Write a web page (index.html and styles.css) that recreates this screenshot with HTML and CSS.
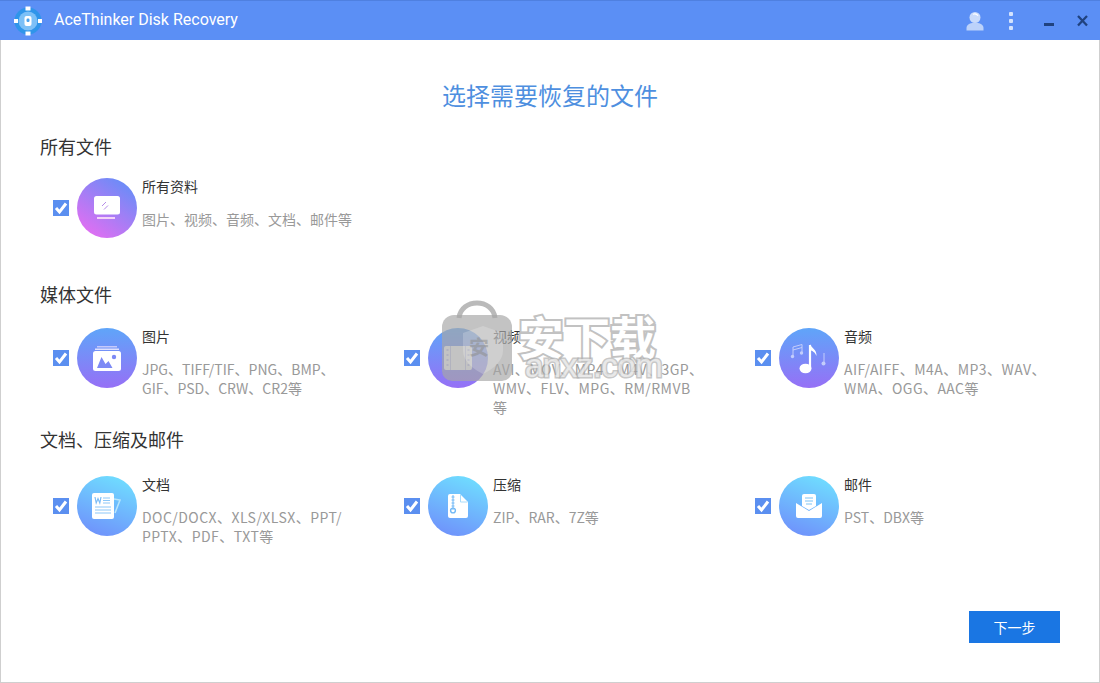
FILE: index.html
```html
<!DOCTYPE html>
<html lang="zh-CN">
<head>
<meta charset="utf-8">
<title>AceThinker Disk Recovery</title>
<link rel="stylesheet" href="styles.css">
</head>
<body>
<div class="window">
  <header class="topbar">
    <svg class="logo" width="30" height="30" viewBox="0 0 30 30">
      <circle cx="15" cy="15" r="13.500" fill="#2f95ea"/>
      <circle cx="15" cy="15" r="9.500" fill="#7cc0f7"/>
      <rect x="12.500" y="0.500" width="5" height="4" fill="#fff"/>
      <rect x="12.500" y="25.500" width="5" height="4" fill="#fff"/>
      <rect x="1" y="13" width="4" height="4" fill="#fff"/>
      <rect x="25" y="13" width="4" height="4" fill="#fff"/>
      <rect x="11.500" y="10" width="7" height="10" rx="2" fill="#fff"/>
      <rect x="13.500" y="12.500" width="3" height="3.500" rx="1.200" fill="#4aa3ef"/>
    </svg>
    <span class="app-name">AceThinker Disk Recovery</span>
    <div class="controls">
      <svg class="ctl-user" width="20" height="20" viewBox="0 0 20 20">
        <circle cx="10" cy="6.500" r="5.500" fill="#c9dbfb"/>
        <path d="M8 3.200a4 4 0 0 1 5 1.600" stroke="#fff" stroke-width="1.200" fill="none"/>
        <path d="M1.500 19.500v-2.500c0-3 3-4.500 5.500-5h6c2.500.5 5.500 2 5.500 5v2.500z" fill="#bcd2fa"/>
      </svg>
      <svg class="ctl-more" width="8" height="20" viewBox="0 0 8 20">
        <rect x="2" y="1" width="4" height="4" rx="1" fill="#d4e3fd"/>
        <rect x="2" y="8" width="4" height="4" rx="1" fill="#d4e3fd"/>
        <rect x="2" y="15" width="4" height="4" rx="1" fill="#d4e3fd"/>
      </svg>
      <svg class="ctl-min" width="10" height="20" viewBox="0 0 10 20">
        <rect x="0" y="12" width="10" height="3" fill="#20427f"/>
      </svg>
      <svg class="ctl-close" width="11" height="20" viewBox="0 0 11 20">
        <path d="M1 5l9 9.500M10 5l-9 9.500" stroke="#20427f" stroke-width="2.300" fill="none"/>
      </svg>
    </div>
  </header>

  <main class="content">
    <h1 class="page-title">选择需要恢复的文件</h1>

    <section class="section section-all">
      <h2 class="section-title">所有文件</h2>
      <div class="grid">
        <div class="item">
          <span class="check"><svg width="16" height="16" viewBox="0 0 16 16"><path d="M3 8l3.500 4L13 3.500" stroke="#fff" stroke-width="3" fill="none"/></svg></span>
          <span class="disc disc-pink">
            <svg width="28" height="24" viewBox="0 0 28 24">
              <rect x="1" y="0" width="26" height="18.500" rx="2.500" fill="#fff"/>
              <rect x="4" y="21" width="18" height="2" fill="#f3d3f8"/>
              <path d="M9 10l4-4M11 13.500l4-4" stroke="#b58be8" stroke-width="1"/>
            </svg>
          </span>
          <div class="info">
            <div class="name">所有资料</div>
            <p class="desc">图片、视频、音频、文档、邮件等</p>
          </div>
        </div>
      </div>
    </section>

    <section class="section section-media">
      <h2 class="section-title">媒体文件</h2>
      <div class="grid">
        <div class="item">
          <span class="check"><svg width="16" height="16" viewBox="0 0 16 16"><path d="M3 8l3.500 4L13 3.500" stroke="#fff" stroke-width="3" fill="none"/></svg></span>
          <span class="disc disc-violet">
            <svg width="28" height="25" viewBox="0 0 28 25">
              <rect x="4" y="0" width="20" height="1.500" fill="#c6c9fb"/>
              <rect x="2" y="2.500" width="24" height="1.500" fill="#dfe0fd"/>
              <rect x="0" y="5" width="28" height="20" rx="2.500" fill="#fff"/>
              <path d="M4 22l4.500-11 4 7 3-3 4 7z" fill="#7d8af5"/>
              <circle cx="21" cy="11" r="2.200" fill="#7d8af5"/>
            </svg>
          </span>
          <div class="info">
            <div class="name">图片</div>
            <p class="desc">JPG、TIFF/TIF、PNG、BMP、<br>GIF、PSD、CRW、CR2等</p>
          </div>
        </div>
        <div class="item">
          <span class="check"><svg width="16" height="16" viewBox="0 0 16 16"><path d="M3 8l3.500 4L13 3.500" stroke="#fff" stroke-width="3" fill="none"/></svg></span>
          <span class="disc disc-violet">
            <svg width="28" height="24" viewBox="0 0 28 24">
              <rect x="0" y="0" width="28" height="24" rx="2" fill="#fff"/>
              <rect x="6" y="0" width="1" height="24" fill="#c6c9f0"/>
              <rect x="21" y="0" width="1" height="24" fill="#c6c9f0"/>
              <path d="M2.500 4h2M2.500 9h2M2.500 14h2M2.500 19h2M23.500 4h2M23.500 9h2M23.500 14h2M23.500 19h2" stroke="#b4b8ee" stroke-width="1.500"/>
            </svg>
          </span>
          <div class="info">
            <div class="name">视频</div>
            <p class="desc desc-wide">AVI、MOV、MP4、M4V、3GP、<br>WMV、FLV、MPG、RM/RMVB<br>等</p>
          </div>
        </div>
        <div class="item">
          <span class="check"><svg width="16" height="16" viewBox="0 0 16 16"><path d="M3 8l3.500 4L13 3.500" stroke="#fff" stroke-width="3" fill="none"/></svg></span>
          <span class="disc disc-violet">
            <svg width="38" height="34" viewBox="0 0 38 34">
              <path d="M20 4v23" stroke="#fff" stroke-width="2.200"/>
              <ellipse cx="15.500" cy="27.500" rx="6" ry="4.800" fill="#fff"/>
              <path d="M20 3c1 4 7 5 6.500 12-1.500-4-4-5-6.500-6z" fill="#fff"/>
              <path d="M3 6l9-2.500M3 9l9-2.500M3 6v9M12 3.500v8" stroke="#c3cdfb" stroke-width="1" fill="none"/>
              <circle cx="2.500" cy="15.500" r="1.700" fill="#c3cdfb"/>
              <circle cx="11.500" cy="12" r="1.700" fill="#c3cdfb"/>
              <path d="M34 12v10" stroke="#c3cdfb" stroke-width="1"/>
              <circle cx="33.500" cy="22.500" r="2" fill="#c3cdfb"/>
            </svg>
          </span>
          <div class="info">
            <div class="name">音频</div>
            <p class="desc desc-wide">AIF/AIFF、M4A、MP3、WAV、<br>WMA、OGG、AAC等</p>
          </div>
        </div>
      </div>
    </section>

    <section class="section section-docs">
      <h2 class="section-title">文档、压缩及邮件</h2>
      <div class="grid">
        <div class="item">
          <span class="check"><svg width="16" height="16" viewBox="0 0 16 16"><path d="M3 8l3.500 4L13 3.500" stroke="#fff" stroke-width="3" fill="none"/></svg></span>
          <span class="disc disc-cyan">
            <svg width="30" height="26" viewBox="0 0 30 26">
              <path d="M22 6l6 1-5 13" stroke="#b8e6fd" stroke-width="1.500" fill="none"/>
              <rect x="0" y="0" width="22" height="26" rx="2" fill="#fff"/>
              <path d="M3 4l1.200 6L6 5.500 7.800 10 9 4" stroke="#7cbdf7" stroke-width="1.200" fill="none"/>
              <path d="M11 5h7M11 7.500h7M11 10h7M3 14h16M3 17h16M3 20h16" stroke="#8cc7f8" stroke-width="1"/>
            </svg>
          </span>
          <div class="info">
            <div class="name">文档</div>
            <p class="desc desc-wide">DOC/DOCX、XLS/XLSX、PPT/<br>PPTX、PDF、TXT等</p>
          </div>
        </div>
        <div class="item">
          <span class="check"><svg width="16" height="16" viewBox="0 0 16 16"><path d="M3 8l3.500 4L13 3.500" stroke="#fff" stroke-width="3" fill="none"/></svg></span>
          <span class="disc disc-cyan">
            <svg width="20" height="24" viewBox="0 0 20 24">
              <path d="M2 0h10l8 8v14a2 2 0 0 1-2 2H2a2 2 0 0 1-2-2V2a2 2 0 0 1 2-2z" fill="#fff"/>
              <path d="M12.500 0.500v7.500h7" stroke="#a9dcfb" stroke-width="1" fill="none"/>
              <path d="M5 1v15M3.500 3h3M3.500 6h3M3.500 9h3M3.500 12h3" stroke="#70b8f6" stroke-width="1"/>
              <circle cx="5" cy="16.500" r="2.400" fill="none" stroke="#70b8f6" stroke-width="1.400"/>
            </svg>
          </span>
          <div class="info">
            <div class="name">压缩</div>
            <p class="desc">ZIP、RAR、7Z等</p>
          </div>
        </div>
        <div class="item">
          <span class="check"><svg width="16" height="16" viewBox="0 0 16 16"><path d="M3 8l3.500 4L13 3.500" stroke="#fff" stroke-width="3" fill="none"/></svg></span>
          <span class="disc disc-cyan">
            <svg width="26" height="24" viewBox="0 0 26 24">
              <path d="M6 12V2a2 2 0 0 1 2-2h10a2 2 0 0 1 2 2v10l-7 4z" fill="#fff"/>
              <path d="M9 4h8M9 7h8M10 10h6" stroke="#7cc3f6" stroke-width="1"/>
              <path d="M0 9l13 8 13-8v13a2 2 0 0 1-2 2H2a2 2 0 0 1-2-2z" fill="#fff"/>
            </svg>
          </span>
          <div class="info">
            <div class="name">邮件</div>
            <p class="desc">PST、DBX等</p>
          </div>
        </div>
      </div>
    </section>

    <div class="footer">
      <button class="next" type="button">下一步</button>
    </div>
  </main>

  <div class="watermark">
    <svg class="wm-bag" width="70" height="82" viewBox="0 0 70 82">
      <path d="M17 18C19 -2 51 -2 53 18" stroke="#a9a9a9" stroke-opacity=".8" stroke-width="5" fill="none"/>
      <path d="M12 15h46a12 12 0 0 1 12 12v44a10 10 0 0 1-10 10H10a10 10 0 0 1-10-10V27a12 12 0 0 1 12-12z" fill="#a6a6a6" fill-opacity=".68"/>
      <path d="M21 33l20-7 20 7v18c0 10-10 18-20 23-10-5-20-13-20-23z" fill="#fff" fill-opacity=".2"/>
    </svg>
    <span class="wm-shield">安</span>
    <span class="wm-cn">安下载</span>
    <span class="wm-en">anxz.com</span>
  </div>
</div>
</body>
</html>
```

FILE: styles.css
```css
* {
  box-sizing: border-box;
}

html,
body {
  margin: 0;
  padding: 0;
  height: 100%;
  background: #fff;
  overflow: hidden;
}

body {
  font-family: "Noto Sans CJK SC", "Liberation Sans", sans-serif;
}

.window {
  position: relative;
  width: 1100px;
  height: 683px;
  display: flex;
  flex-direction: column;
  border: 1px solid #cfcfcf;
  border-top: 0;
}

.topbar {
  flex: none;
  height: 40px;
  margin: 0 -1px;
  display: flex;
  align-items: center;
  padding: 0 12px 0 13px;
  background: #5b8ff5;
  border-top: 1px solid #4f80e0;
}

.logo {
  flex: none;
}

.app-name {
  margin-left: 11px;
  margin-bottom: 2px;
  font-family: Roboto, "Liberation Sans", sans-serif;
  font-size: 16px;
  color: #fff;
}

.controls {
  margin-left: auto;
  display: flex;
  align-items: center;
}

.ctl-more {
  margin-left: 22px;
}

.ctl-min {
  margin-left: 29px;
}

.ctl-close {
  margin-left: 23px;
}

.content {
  flex: 1;
  min-height: 0;
  display: flex;
  flex-direction: column;
  padding: 39px;
}

.page-title {
  margin: 0 0 23px;
  height: 32px;
  font-size: 24px;
  font-weight: 400;
  line-height: 32px;
  text-align: center;
  color: #4e8fdf;
}

.section-title {
  margin: 0;
  height: 24px;
  font-size: 18px;
  font-weight: 400;
  line-height: 24px;
  color: #333;
}

.section-all {
  margin-bottom: 44px;
}

.section-all .grid {
  margin-top: 20px;
}

.section-media {
  margin-bottom: 10px;
}

.section-media .grid {
  margin-top: 22px;
}

.section-docs .grid {
  margin-top: 25px;
}

.grid {
  display: grid;
  grid-template-columns: repeat(3, 351px);
  padding-left: 13px;
}

.item {
  display: flex;
  align-items: flex-start;
}

.check {
  flex: none;
  width: 16px;
  height: 16px;
  margin-top: 22px;
  background: #5b8ff0;
}

.check svg {
  display: block;
}

.disc {
  flex: none;
  width: 60px;
  height: 60px;
  margin-left: 8px;
  border-radius: 50%;
  display: flex;
  align-items: center;
  justify-content: center;
}

.disc-pink {
  background: linear-gradient(215deg, #5f8ff8 5%, #e36ef2 90%);
}

.disc-violet {
  background: linear-gradient(180deg, #5fa5f9 0%, #9670f6 100%);
}

.disc-cyan {
  background: linear-gradient(200deg, #6fe0ff 5%, #6f8ffb 95%);
}

.info {
  width: 214px;
  margin-left: 5px;
}

.name {
  height: 17px;
  font-size: 14px;
  line-height: 17px;
  color: #333;
}

.desc {
  margin: 15px 0 0;
  font-size: 14px;
  line-height: 19px;
  color: #999;
  white-space: nowrap;
}

.desc-wide {
  letter-spacing: 0.45px;
}

.footer {
  margin-top: auto;
  display: flex;
  justify-content: flex-end;
}

.next {
  width: 91px;
  height: 32px;
  padding: 0;
  border: 0;
  background: #1a76e3;
  color: #fff;
  font-family: inherit;
  font-size: 14px;
}

.watermark {
  position: absolute;
  left: 441px;
  top: 300px;
  width: 220px;
  height: 82px;
  pointer-events: none;
}

.wm-bag {
  position: absolute;
  left: 0;
  top: 0;
}

.wm-shield {
  position: absolute;
  left: 27px;
  top: 35px;
  font-size: 20px;
  line-height: 24px;
  font-weight: 700;
  color: #8f8f8f;
  opacity: 0.55;
}

.wm-cn {
  position: absolute;
  left: 76px;
  top: 8px;
  font-size: 46px;
  line-height: 54px;
  font-weight: 700;
  color: #fff;
  -webkit-text-stroke: 4px #c2c2c2;
  paint-order: stroke fill;
  white-space: nowrap;
}

.wm-en {
  position: absolute;
  left: 83px;
  top: 50px;
  font-family: "Liberation Sans", sans-serif;
  font-size: 33px;
  line-height: 32px;
  letter-spacing: -0.5px;
  color: rgba(255, 255, 255, 0.6);
  -webkit-text-stroke: 3px rgba(175, 175, 175, 0.7);
  paint-order: stroke fill;
  white-space: nowrap;
}
```
